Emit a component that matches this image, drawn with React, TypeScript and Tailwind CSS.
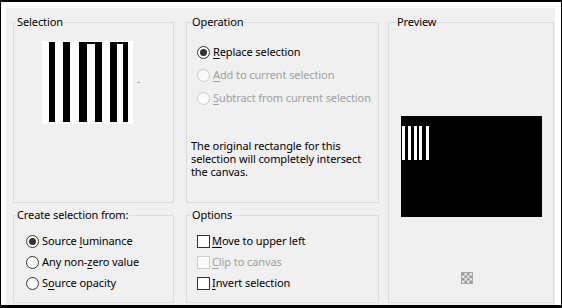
import React from "react";

const font = { fontFamily: '"Noto Sans", "Open Sans", sans-serif' };

function Radio({ checked = false, disabled = false }: { checked?: boolean; disabled?: boolean }) {
  return (
    <span
      className={
        "flex items-center justify-center w-[13px] h-[13px] rounded-full border shrink-0 " +
        (disabled ? "border-[#cccccc] bg-[#fbfbfb]" : "border-[#333333] bg-white")
      }
    >
      {checked && <span className="w-[7px] h-[7px] rounded-full bg-[#333333]" />}
    </span>
  );
}

function Check({ disabled = false }: { disabled?: boolean }) {
  return (
    <span
      className={
        "block w-[13px] h-[13px] border shrink-0 " +
        (disabled ? "border-[#cccccc] bg-[#fbfbfb]" : "border-[#333333] bg-white")
      }
    />
  );
}

function Legend({ children, offset = "ml-[2px]" }: { children: React.ReactNode; offset?: string }) {
  return <legend className={offset + " px-[1px] text-[11px] leading-[16px] text-black"}>{children}</legend>;
}

export default function App() {
  return (
    <div
      style={font}
      className="w-[562px] h-[308px] bg-black pt-[2px] pl-[1px] pr-[1px] pb-[3px] tracking-[-0.1px]"
    >
      <div className="w-full h-full bg-white pt-[6px] pl-[5px] pr-[6px]">
        <div className="w-full h-full bg-[#f0f0f0] pt-[6px] pl-[7px] flex">
          {/* Column 1 */}
          <div className="w-[161px] flex flex-col gap-[4px]">
            <fieldset className="h-[189px] border border-[#dcdcdc] m-0 p-0">
              <Legend>Selection</Legend>
              <div className="flex items-center ml-[28px] mt-[11px]">
                <svg width="91" height="83" viewBox="0 0 91 83" className="block">
                  <rect x="0" y="0" width="91" height="83" fill="#ffffff" />
                  <rect x="7" y="1" width="6" height="80" fill="#000" />
                  <rect x="21" y="1" width="7" height="80" fill="#000" />
                  <rect x="37" y="1" width="8" height="80" fill="#000" />
                  <rect x="45" y="1" width="8" height="2" fill="#000" />
                  <rect x="53" y="1" width="7" height="80" fill="#000" />
                  <rect x="68" y="1" width="7" height="80" fill="#000" />
                  <rect x="75" y="1" width="6" height="2" fill="#000" />
                  <rect x="81" y="1" width="5" height="80" fill="#000" />
                </svg>
                <span className="block w-[3px] h-[1px] bg-[#a8a8a8] ml-[4px]" />
              </div>
            </fieldset>
            <fieldset className="h-[96px] border border-[#dcdcdc] m-0 p-0">
              <Legend>Create selection from:</Legend>
              <div className="flex flex-col mt-[8px] pl-[12px] text-[11px] text-black">
                <div className="h-[21px] flex items-center gap-[3px]">
                  <Radio checked />
                  <span>
                    Source <u className="underline-offset-2">l</u>uminance
                  </span>
                </div>
                <div className="h-[21px] flex items-center gap-[3px]">
                  <Radio />
                  <span>
                    Any non-<u className="underline-offset-2">z</u>ero value
                  </span>
                </div>
                <div className="h-[21px] flex items-center gap-[3px]">
                  <Radio />
                  <span>
                    S<u className="underline-offset-2">o</u>urce opacity
                  </span>
                </div>
              </div>
            </fieldset>
          </div>

          {/* Column 2 */}
          <div className="w-[193px] ml-[12px] flex flex-col gap-[4px]">
            <fieldset className="h-[189px] border border-[#dcdcdc] m-0 p-0">
              <Legend offset="ml-[4px]">Operation</Legend>
              <div className="flex flex-col gap-[1px] mt-[11px] pl-[10px] text-[11px]">
                <div className="h-[22px] flex items-center gap-[3px] text-black">
                  <Radio checked />
                  <span>
                    <u className="underline-offset-2">R</u>eplace selection
                  </span>
                </div>
                <div className="h-[22px] flex items-center gap-[3px] text-[#a0a0a0]">
                  <Radio disabled />
                  <span>
                    <u className="underline-offset-2">A</u>dd to current selection
                  </span>
                </div>
                <div className="h-[22px] flex items-center gap-[3px] text-[#a0a0a0]">
                  <Radio disabled />
                  <span>
                    <u className="underline-offset-2">S</u>ubtract from current selection
                  </span>
                </div>
              </div>
              <p className="mt-[30px] pl-[4px] text-[11px] leading-[13px] text-black">
                The original rectangle for this
                <br />
                selection will completely intersect
                <br />
                the canvas.
              </p>
            </fieldset>
            <fieldset className="h-[96px] border border-[#dcdcdc] m-0 p-0">
              <Legend offset="ml-[4px]">Options</Legend>
              <div className="flex flex-col mt-[8px] pl-[10px] text-[11px]">
                <div className="h-[21px] flex items-center gap-[2px] text-black">
                  <Check />
                  <span>
                    <u className="underline-offset-2">M</u>ove to upper left
                  </span>
                </div>
                <div className="h-[21px] flex items-center gap-[2px] text-[#a0a0a0]">
                  <Check disabled />
                  <span>
                    <u className="underline-offset-2">C</u>lip to canvas
                  </span>
                </div>
                <div className="h-[21px] flex items-center gap-[2px] text-black">
                  <Check />
                  <span>
                    <u className="underline-offset-2">I</u>nvert selection
                  </span>
                </div>
              </div>
            </fieldset>
          </div>

          {/* Column 3 */}
          <div className="w-[166px] ml-[9px]">
            <fieldset className="h-[289px] border border-[#dcdcdc] m-0 p-0">
              <Legend offset="ml-[7px]">Preview</Legend>
              <div className="ml-[12px] mt-[86px]">
                <svg width="141" height="101" viewBox="0 0 141 101" className="block">
                  <rect x="0" y="0" width="141" height="101" fill="#000" />
                  <rect x="1" y="10" width="3" height="34" fill="#fff" />
                  <rect x="7" y="10" width="3" height="34" fill="#fff" />
                  <rect x="13" y="10" width="3" height="34" fill="#fff" />
                  <rect x="18" y="10" width="3" height="34" fill="#fff" />
                  <rect x="25" y="10" width="3" height="34" fill="#fff" />
                </svg>
              </div>
              <div className="ml-[72px] mt-[55px]">
                <svg width="12" height="12" viewBox="0 0 12 12" className="block">
                  <rect x="0.5" y="0.5" width="11" height="11" fill="#e6e6e6" stroke="#a8a8a8" />
                  {[0, 1, 2, 3].map((r) =>
                    [0, 1, 2, 3].map((c) =>
                      (r + c) % 2 === 0 ? (
                        <rect key={r + "-" + c} x={1 + c * 2.5} y={1 + r * 2.5} width="2.5" height="2.5" fill="#9a9a9a" />
                      ) : null
                    )
                  )}
                </svg>
              </div>
            </fieldset>
          </div>
        </div>
      </div>
    </div>
  );
}
